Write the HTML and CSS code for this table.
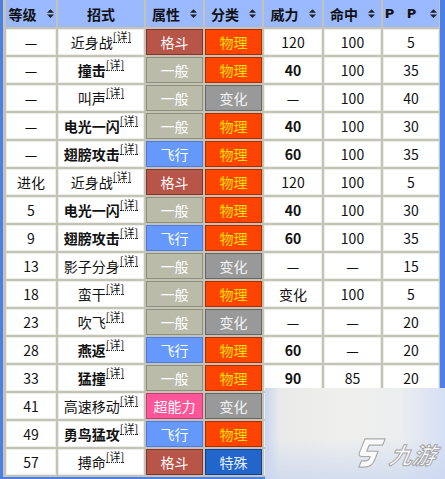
FILE: index.html
```html
<!DOCTYPE html>
<html lang="zh">
<head>
<meta charset="utf-8">
<link rel="stylesheet" href="styles.css">
</head>
<body>
<div class="frame">
  <div class="tbl">
    <div class="h"><span>等级</span><svg class="sort" viewBox="0 0 8 10"><path d="M4 0L8 4H0Z M4 10L8 6H0Z"/></svg></div>
    <div class="h"><span>招式</span></div>
    <div class="h"><span>属性</span><svg class="sort" viewBox="0 0 8 10"><path d="M4 0L8 4H0Z M4 10L8 6H0Z"/></svg></div>
    <div class="h"><span>分类</span><svg class="sort" viewBox="0 0 8 10"><path d="M4 0L8 4H0Z M4 10L8 6H0Z"/></svg></div>
    <div class="h"><span>威力</span><svg class="sort" viewBox="0 0 8 10"><path d="M4 0L8 4H0Z M4 10L8 6H0Z"/></svg></div>
    <div class="h"><span>命中</span><svg class="sort" viewBox="0 0 8 10"><path d="M4 0L8 4H0Z M4 10L8 6H0Z"/></svg></div>
    <div class="h"><span class="pp">P P</span><svg class="sort" viewBox="0 0 8 10"><path d="M4 0L8 4H0Z M4 10L8 6H0Z"/></svg></div>

    <div class="c">—</div><div class="c">近身战<sup>[详]</sup></div><div class="t fight">格斗</div><div class="t phys">物理</div><div class="c">120</div><div class="c">100</div><div class="c">5</div>
    <div class="c">—</div><div class="c b">撞击<sup>[详]</sup></div><div class="t norm">一般</div><div class="t phys">物理</div><div class="c b">40</div><div class="c">100</div><div class="c">35</div>
    <div class="c">—</div><div class="c">叫声<sup>[详]</sup></div><div class="t norm">一般</div><div class="t stat">变化</div><div class="c">—</div><div class="c">100</div><div class="c">40</div>
    <div class="c">—</div><div class="c b">电光一闪<sup>[详]</sup></div><div class="t norm">一般</div><div class="t phys">物理</div><div class="c b">40</div><div class="c">100</div><div class="c">30</div>
    <div class="c">—</div><div class="c b">翅膀攻击<sup>[详]</sup></div><div class="t fly">飞行</div><div class="t phys">物理</div><div class="c b">60</div><div class="c">100</div><div class="c">35</div>
    <div class="c">进化</div><div class="c">近身战<sup>[详]</sup></div><div class="t fight">格斗</div><div class="t phys">物理</div><div class="c">120</div><div class="c">100</div><div class="c">5</div>
    <div class="c">5</div><div class="c b">电光一闪<sup>[详]</sup></div><div class="t norm">一般</div><div class="t phys">物理</div><div class="c b">40</div><div class="c">100</div><div class="c">30</div>
    <div class="c">9</div><div class="c b">翅膀攻击<sup>[详]</sup></div><div class="t fly">飞行</div><div class="t phys">物理</div><div class="c b">60</div><div class="c">100</div><div class="c">35</div>
    <div class="c">13</div><div class="c">影子分身<sup>[详]</sup></div><div class="t norm">一般</div><div class="t stat">变化</div><div class="c">—</div><div class="c">—</div><div class="c">15</div>
    <div class="c">18</div><div class="c">蛮干<sup>[详]</sup></div><div class="t norm">一般</div><div class="t phys">物理</div><div class="c">变化</div><div class="c">100</div><div class="c">5</div>
    <div class="c">23</div><div class="c">吹飞<sup>[详]</sup></div><div class="t norm">一般</div><div class="t stat">变化</div><div class="c">—</div><div class="c">—</div><div class="c">20</div>
    <div class="c">28</div><div class="c b">燕返<sup>[详]</sup></div><div class="t fly">飞行</div><div class="t phys">物理</div><div class="c b">60</div><div class="c">—</div><div class="c">20</div>
    <div class="c">33</div><div class="c b">猛撞<sup>[详]</sup></div><div class="t norm">一般</div><div class="t phys">物理</div><div class="c b">90</div><div class="c">85</div><div class="c">20</div>
    <div class="c">41</div><div class="c">高速移动<sup>[详]</sup></div><div class="t psy">超能力</div><div class="t stat">变化</div><div class="c">—</div><div class="c">—</div><div class="c">30</div>
    <div class="c">49</div><div class="c b">勇鸟猛攻<sup>[详]</sup></div><div class="t fly">飞行</div><div class="t phys">物理</div><div class="c b">120</div><div class="c">100</div><div class="c">15</div>
    <div class="c">57</div><div class="c">搏命<sup>[详]</sup></div><div class="t fight">格斗</div><div class="t spec">特殊</div><div class="c">变化</div><div class="c">100</div><div class="c">5</div>
  </div>
  <div class="mark">
    <svg class="logo" viewBox="0 0 34 36">
      <path d="M9 2 H32 L29 9 H14 L11 16 H24 L20 26 Q17 34 8 34 H2 L5 27 H10 Q13 27 14 24 L15 22 H6 Q1 22 3 17 Z" fill="#fafafa" stroke="#a9a9a9" stroke-width="1.3" stroke-linejoin="round"/>
    </svg>
    <span class="brand">九游</span>
  </div>
</div>
</body>
</html>
```
FILE: styles.css
```css
html, body {
  margin: 0;
  padding: 0;
  width: 445px;
  height: 479px;
  overflow: hidden;
  background: #4a80e8;
}
.frame {
  position: relative;
  box-sizing: border-box;
  width: 445px;
  height: 477px;
  background: #c4c4b4;
  border-left: 3px solid #4a80e8;
  border-right: 5px solid #4a80e8;
  padding: 0 1px 0 3px;
  font-family: "Noto Sans CJK SC", "DejaVu Sans", sans-serif;
  font-size: 14px;
  color: #111;
}
.tbl {
  display: grid;
  grid-template-columns: 50px 86px 57px 57px 58px 57px 56px;
  grid-template-rows: 27px;
  grid-auto-rows: 26px;
  gap: 2px;
}
.tbl > div {
  box-sizing: border-box;
  display: flex;
  align-items: center;
  justify-content: center;
  white-space: nowrap;
  line-height: 1;
}
.h {
  background: #9ab9ff;
  font-weight: bold;
  gap: 10px;
  font-size: 14px;
}
.h .pp { letter-spacing: 4px; font-family: "DejaVu Sans", sans-serif; font-size: 13px; }
.sort { width: 7px; height: 9px; fill: #222; }
.c {
  background: #fff;
  border: 1px solid #ececec;
}
.b { font-weight: bold; }
sup {
  font-size: 11px;
  line-height: 1;
  position: relative;
  top: -5px;
  vertical-align: baseline;
  border-bottom: 1px dotted #222;
  font-weight: normal;
}
.t {
  border: 1px solid;
  color: #fff;
}
.fight { background: #b85549; border-color: #8b3228; }
.norm { background: #bbbbaa; border-color: #8f8f80; }
.fly { background: #6699ff; border-color: #4a7ae8; }
.psy { background: #ff5599; border-color: #c83a72; }
.phys { background: #ff4400; border-color: #b32a00; color: #ffe000; }
.stat { background: #999999; border-color: #666666; color: #f4f4f4; }
.spec { background: #2266cc; border-color: #113f99; color: #e8f0ff; }
.mark {
  position: absolute;
  left: 262px;
  top: 388px;
  width: 180px;
  height: 91px;
  background:
    linear-gradient(to bottom, rgba(255,255,255,0) 55%, rgba(200,214,240,0.7) 100%),
    linear-gradient(to right, #c9d5ef 0, #eaeaea 8%, #efefed 45%, #eceeef 75%, #d6e0f4 100%);
  display: flex;
  align-items: flex-end;
  justify-content: flex-start;
  padding: 0 0 10px 92px;
  box-sizing: border-box;
  gap: 3px;
}
.logo { width: 30px; height: 32px; flex: none; }
.brand {
  font-family: "Noto Sans CJK SC", sans-serif;
  font-size: 23px;
  font-weight: bold;
  font-style: italic;
  color: #fafafa;
  -webkit-text-stroke: 1px #a5a5a5;
  line-height: 30px;
  transform: skewX(-10deg);
  white-space: nowrap;
}
```
